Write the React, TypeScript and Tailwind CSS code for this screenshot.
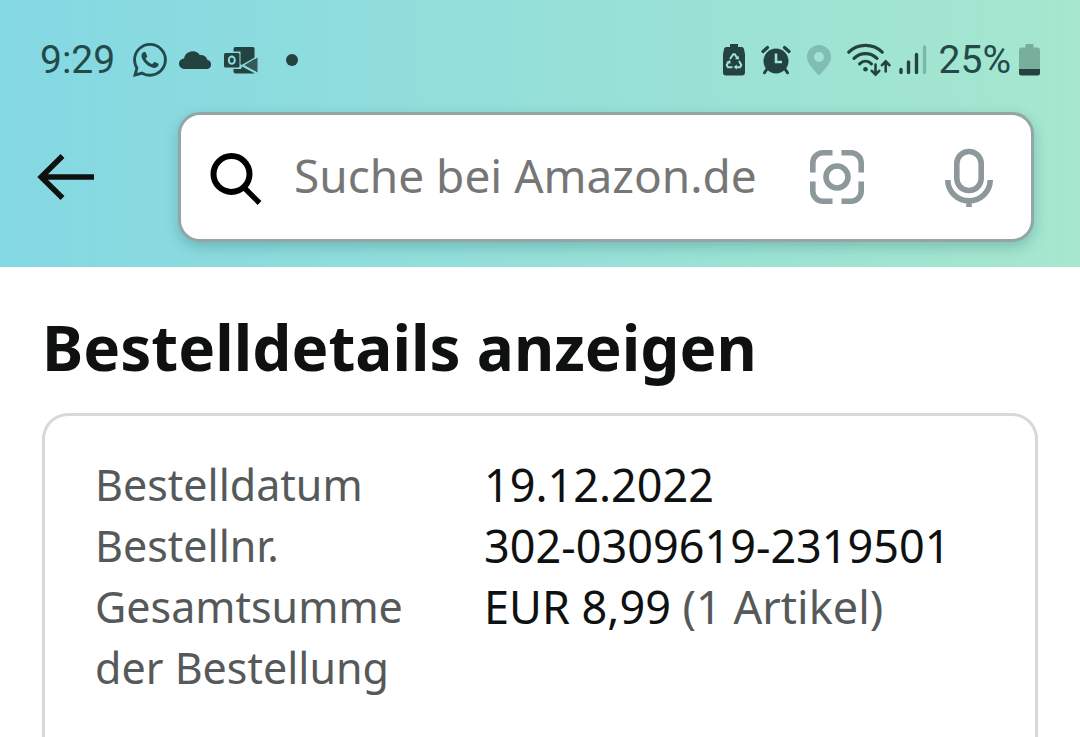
import { BsWhatsapp } from "react-icons/bs";

const orderRows = [
  { label: "Bestelldatum", value: "19.12.2022" },
  { label: "Bestellnr.", value: "302-0309619-2319501" },
  { label: "Gesamtsumme der Bestellung", value: "EUR 8,99", note: "(1 Artikel)" },
];

const CloudIcon = () => (
  <svg width="33" height="18" viewBox="0 0 33 18" fill="currentColor">
    <path d="M5.500 18A5.300 5.300 0 0 1 5 7.400 8.800 8.800 0 0 1 20.800 4 7 7 0 0 1 28.500 9 4.600 4.600 0 0 1 28.300 18Z" />
  </svg>
);

const OutlookIcon = () => (
  <svg width="34" height="27" viewBox="0 0 34 27" fill="currentColor">
    <path d="M11.500 0H29a1.500 1.500 0 0 1 1.500 1.500V13L18 18.500 16.500 17V4.500H9.500V2a2 2 0 0 1 2-2Z" />
    <path d="M33.500 10.500V25.500L20 18.200Z" opacity="0.850" />
    <path d="M9.500 22H17l1-2.500L31 26.500H11.500a2 2 0 0 1-2-2Z" />
    <path d="M33 10 18.500 18.200 33 26" fill="none" stroke="#8bdade" strokeWidth="1.400" />
    <rect x="0" y="6" width="15.500" height="14.500" rx="1.500" />
    <ellipse cx="7.800" cy="13.200" rx="3" ry="3.600" fill="none" stroke="#8bdade" strokeWidth="2" />
  </svg>
);

const RecycleBatteryIcon = () => (
  <svg width="22" height="32" viewBox="0 0 22 32" fill="currentColor">
    <path d="M7 0h8v3h3.500A2.500 2.500 0 0 1 21 5.500L22 10v18.500a3 3 0 0 1-3 3H3a3 3 0 0 1-3-3V10L1 5.500A2.500 2.500 0 0 1 3.500 3H7Z" />
    <g fill="none" stroke="#9fe4d5" strokeWidth="2">
      <path d="m7 15 3.200-4.700h1.600l2.200 3.400" />
      <path d="m16 17 2.300 4-1.300 2.200h-4" />
      <path d="M9.500 23.200H5L3.700 21l2.100-3.500" />
    </g>
    <path d="m12 15 4 .500-.500-4ZM13.800 20.400v5.400l-3-2.700ZM3.200 18.200l4-2.200.4 3.800Z" fill="#9fe4d5" />
  </svg>
);

const AlarmIcon = () => (
  <svg width="30" height="30" viewBox="0 0 30 30" fill="currentColor">
    <circle cx="15" cy="16" r="12.500" />
    <path d="M2 6.500 6.500 2.500M28 6.500 23.500 2.500" stroke="currentColor" strokeWidth="3.200" strokeLinecap="round" />
    <path d="m6 24-2.500 3.800M24 24l2.500 3.800" stroke="currentColor" strokeWidth="3" strokeLinecap="round" />
    <path d="M15 8.500V17h6" fill="none" stroke="#9fe4d4" strokeWidth="2.600" />
  </svg>
);

const PinIcon = () => (
  <svg width="24" height="31" viewBox="0 0 24 31" fill="#80beb3">
    <path
      fillRule="evenodd"
      d="M12 0a12 12 0 0 1 12 12c0 7-7 13-12 18.500C7 25 0 19 0 12A12 12 0 0 1 12 0Zm0 7a5 5 0 1 0 0 10 5 5 0 0 0 0-10Z"
    />
  </svg>
);

const WifiIcon = () => (
  <svg width="44" height="34" viewBox="0 0 44 34" fill="none" stroke="currentColor" strokeWidth="3.200" strokeLinecap="round">
    <path d="M1.800 9.200C11 .200 26 .200 35.200 9.200" />
    <path d="M7 15.400c6.500-6.400 16.500-6.400 23 0" />
    <path d="M12.600 20.800c3.600-3.400 8.400-3.400 11.800 0" />
    <circle cx="18.500" cy="26.200" r="2.300" fill="currentColor" stroke="none" />
    <path d="M28.500 21.500v10M24.800 27.800l3.700 3.900 3.700-3.900M38.700 28.500v-10M35 22.200l3.700-3.900 3.700 3.900" strokeWidth="2.600" />
  </svg>
);

const SignalIcon = () => (
  <svg width="28" height="30" viewBox="0 0 28 30" stroke="currentColor" strokeWidth="3.400" strokeLinecap="round">
    <path d="M2 24.500v3M9.500 17v10.500M17.500 9.500v18" />
    <path d="M25.500 2v25.500" stroke="#7bb8a5" />
  </svg>
);

const BatteryIcon = () => (
  <svg width="21" height="32" viewBox="0 0 21 32">
    <path d="M6.500 0h8v3.500H18a3 3 0 0 1 3 3V25H0V6.500a3 3 0 0 1 3-3h3.500Z" fill="#79ad9c" />
    <path d="M0 25h21v4a2.500 2.500 0 0 1-2.500 2.500h-16A2.500 2.500 0 0 1 0 29Z" fill="#24423f" />
  </svg>
);

const BackIcon = () => (
  <svg width="58" height="48" viewBox="0 0 58 48" fill="none" stroke="#0f1111" strokeWidth="5.500">
    <path d="M5 24h52M25.500 3 4.200 24l21.300 21" />
  </svg>
);

const SearchIcon = () => (
  <svg className="shrink-0" width="52" height="56" viewBox="0 0 52 56" fill="none" stroke="#000" strokeWidth="6">
    <circle cx="21.500" cy="25" r="18" />
    <path d="m34 38.500 15.500 15.500" strokeWidth="5.400" />
  </svg>
);

const ScanIcon = () => (
  <svg width="54" height="54" viewBox="0 0 54 54" fill="none" stroke="#8c9899" strokeWidth="5.600">
    <path d="M2.800 22.500V13A10.200 10.200 0 0 1 13 2.800h9.500M31.500 2.800H41A10.200 10.200 0 0 1 51.200 13v9.500M51.200 31.500V41A10.200 10.200 0 0 1 41 51.200h-9.500M22.500 51.200H13A10.200 10.200 0 0 1 2.800 41v-9.500" />
    <circle cx="27" cy="27" r="11" />
  </svg>
);

const MicIcon = () => (
  <svg width="48" height="60" viewBox="0 0 48 60" fill="none" stroke="#8c9899" strokeWidth="5.600">
    <rect x="11.800" y="4.500" width="24.400" height="39" rx="12.200" />
    <path d="M2.800 33a21.200 20.800 0 0 0 42.400 0M24 53v7" />
  </svg>
);

const StatusBar = () => (
  <div className="flex h-10 items-center justify-between px-10 font-[Roboto,sans-serif] text-[39px] leading-10 text-[#24494b]">
    <div className="flex items-center">
      <span>9:29</span>
      <BsWhatsapp className="ml-[18px]" size={34} />
      <span className="ml-3 flex items-center gap-3 text-[#24423f]">
        <CloudIcon />
        <OutlookIcon />
      </span>
      <span className="ml-7 h-3 w-3 rounded-full bg-[#24423f]" />
    </div>
    <div className="flex items-center text-[#24423f]">
      <div className="flex items-center gap-4">
        <RecycleBatteryIcon />
        <AlarmIcon />
        <PinIcon />
      </div>
      <div className="ml-4 flex items-center gap-2">
        <WifiIcon />
        <SignalIcon />
      </div>
      <span className="ml-3 text-[#24494b]">25%</span>
      <span className="ml-2">
        <BatteryIcon />
      </span>
    </div>
  </div>
);

const SearchBar = () => (
  <div className="mt-8 flex items-center justify-between pl-[37px] pr-[46px]">
    <button type="button" aria-label="Zurück" className="mr-[83px] shrink-0">
      <BackIcon />
    </button>
    <form className="flex h-[130px] min-w-0 flex-1 items-center rounded-[22px] border-[3px] border-[#94a5a6] bg-white pl-[29px] pr-[38px] shadow-[0_5px_14px_rgba(15,80,85,0.25)]">
      <SearchIcon />
      <input
        type="search"
        aria-label="Suche bei Amazon.de"
        placeholder="Suche bei Amazon.de"
        className="ml-8 h-16 min-w-0 flex-1 bg-transparent pb-1 text-[46px] text-[#0f1111] outline-none placeholder:text-[#767676]"
      />
      <button type="button" aria-label="Kamerasuche" className="shrink-0">
        <ScanIcon />
      </button>
      <button type="button" aria-label="Sprachsuche" className="ml-[81px] shrink-0">
        <MicIcon />
      </button>
    </form>
  </div>
);

const App = () => {
  return (
    <div className="flex min-h-screen flex-col bg-white font-['Noto_Sans',sans-serif] text-[#0f1111]">
      <header className="bg-linear-to-r from-[#84d8e3] to-[#a6e7ce] pb-[25px] pt-10">
        <StatusBar />
        <SearchBar />
      </header>

      <main className="flex flex-1 flex-col px-[42px]">
        <h1 className="mt-11 text-[62px] font-bold leading-[72px]">Bestelldetails anzeigen</h1>

        <dl className="mt-[30px] flex-1 rounded-t-[26px] border-[3px] border-b-0 border-[#d5d9d9] pl-[50px] pr-6 pt-[38px] leading-[61px]">
          {orderRows.map((row) => (
            <div key={row.label} className="flex">
              <dt className="w-[389px] shrink-0 pr-12 text-[43px] text-[#565959]">{row.label}</dt>
              <dd className="text-[45px]">
                {row.value}
                {row.note && <span className="text-[#565959]"> {row.note}</span>}
              </dd>
            </div>
          ))}
        </dl>
      </main>
    </div>
  );
};

export default App;
